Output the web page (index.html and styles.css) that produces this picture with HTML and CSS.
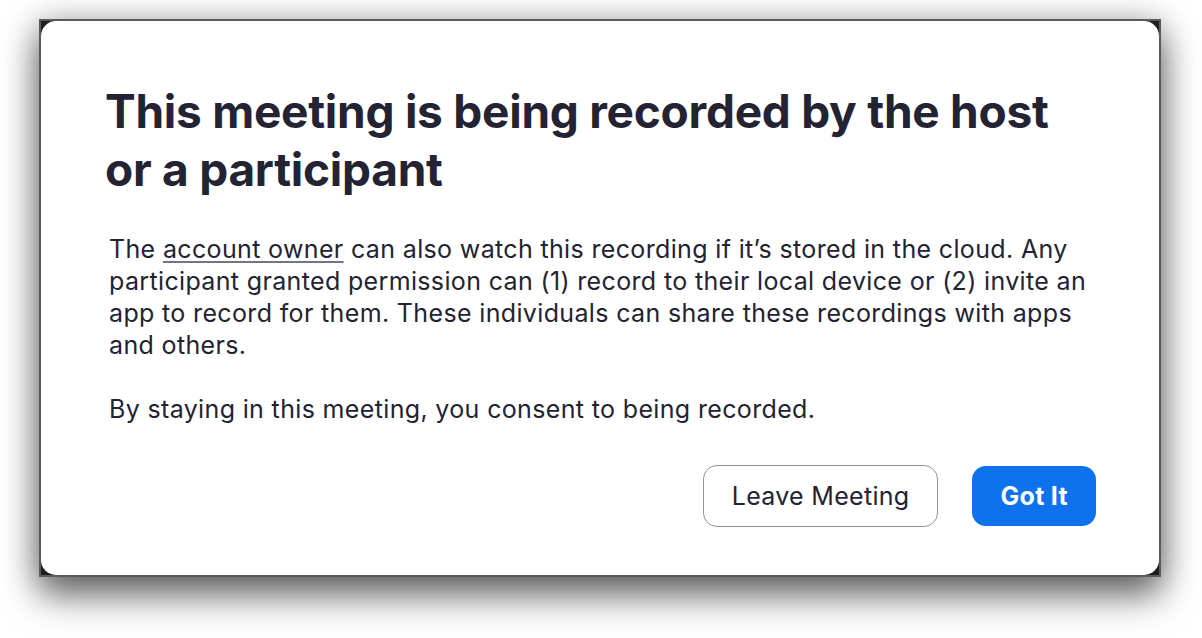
FILE: index.html
```html
<!DOCTYPE html>
<html lang="en">
<head>
    <meta charset="UTF-8">
    <meta name="viewport" content="width=device-width, initial-scale=1.0">
    <title>Recording Notice</title>
    <link rel="stylesheet" href="styles.css">
</head>
<body>
    <div class="window">
        <div class="dialog">
            <h1 class="title">This meeting is being recorded by the host or a participant</h1>
            <div class="message">
                <p>The <a href="#" class="link">account owner</a> can also watch this recording if it’s stored in the cloud. Any participant granted permission can (1) record to their local device or (2) invite an app to record for them. These individuals can share these recordings with apps and others.</p>
                <p>By staying in this meeting, you consent to being recorded.</p>
            </div>
            <div class="actions">
                <button class="btn btn-secondary">Leave Meeting</button>
                <button class="btn btn-primary">Got It</button>
            </div>
        </div>
    </div>
</body>
</html>
```

FILE: styles.css
```css
html {
    height: 100%;
}
body {
    margin: 0;
    height: 100%;
    box-sizing: border-box;
    padding: 19px 41px 0 39px;
    background-color: #fff;
    font-family: Inter, "Noto Sans", sans-serif;
    color: #232333;
}
.window {
    width: 1118px;
    height: 554px;
    border: 2px solid #5a5a5a;
    background-color: #1f1f1f;
    box-shadow: 0 18px 34px rgba(0, 0, 0, 0.58), 0 0 30px rgba(0, 0, 0, 0.22);
}
.dialog {
    height: 100%;
    box-sizing: border-box;
    padding: 61px 63px 0 64px;
    background-color: #fff;
    border-radius: 15px;
    display: flex;
    flex-direction: column;
}
.title {
    max-width: 960px;
    margin: 0;
    font-size: 46px;
    line-height: 58px;
    font-weight: 700;
    letter-spacing: -0.25px;
}
.message {
    margin-top: 35px;
    padding-left: 4px;
    font-size: 25px;
    line-height: 32px;
    letter-spacing: 0.35px;
}
.message p {
    margin: 0 0 32px;
}
.message p:last-child {
    margin-bottom: 0;
}
.link {
    color: inherit;
    text-decoration: underline;
    text-decoration-color: #747487;
    text-underline-offset: 3px;
}
.actions {
    display: flex;
    justify-content: flex-end;
    gap: 34px;
    margin-top: 40px;
}
.btn {
    height: 62px;
    border-radius: 14px;
    font-family: inherit;
    font-size: 25px;
    letter-spacing: 0.3px;
    cursor: pointer;
}
.btn-secondary {
    padding: 0 28px;
    background-color: #fff;
    color: #232333;
    border: 1.5px solid #929292;
}
.btn-primary {
    height: 60px;
    margin-top: 1px;
    padding: 0 28px;
    background-color: #0e72ed;
    color: #fff;
    border: none;
    font-weight: 700;
}
```
